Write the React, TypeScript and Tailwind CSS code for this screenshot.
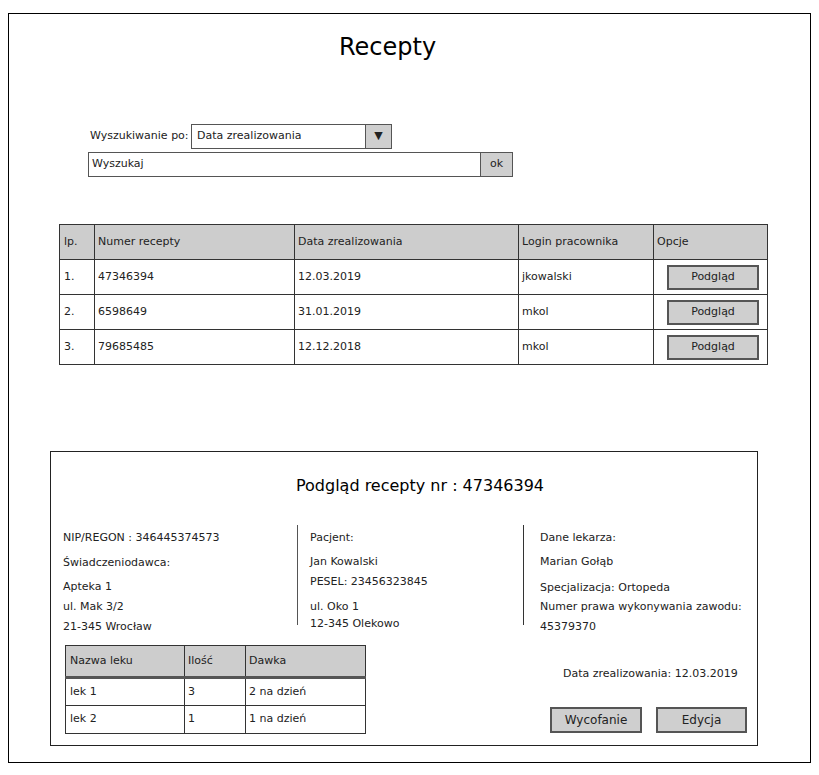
const font = "font-['DejaVu_Sans',sans-serif]"

const rows = [
  { lp: "1.", nr: "47346394", data: "12.03.2019", login: "jkowalski" },
  { lp: "2.", nr: "6598649", data: "31.01.2019", login: "mkol" },
  { lp: "3.", nr: "79685485", data: "12.12.2018", login: "mkol" },
]

const drugs = [
  { name: "lek 1", qty: "3", dose: "2 na dzień" },
  { name: "lek 2", qty: "1", dose: "1 na dzień" },
]

function GreyButton({ label, className = "" }: { label: string; className?: string }) {
  return (
    <div
      className={`flex items-center justify-center border-2 border-[#555] bg-[#cfcfcf] text-[#222] ${className}`}
    >
      {label}
    </div>
  )
}

export default function App() {
  return (
    <div className={`${font} h-[775px] w-[819px] bg-white pl-2 pt-[13px] text-[#222]`}>
      <div className="h-[750px] w-[803px] border border-black">
        {/* title */}
        <h1 className="pr-[44px] pt-[17px] text-center text-[24px] leading-[32px] text-black">Recepty</h1>

        {/* search */}
        <div className="ml-[79px] mt-[61px] text-[11px]">
          <div className="flex items-center">
            <span className="ml-[2px] w-[101px] whitespace-nowrap">Wyszukiwanie po:</span>
            <div className="flex h-[25px] w-[201px] border border-[#555]">
              <div className="flex flex-1 items-center pl-[5px]">Data zrealizowania</div>
              <div className="flex w-[26px] items-center justify-center border-l border-[#555] bg-[#cfcfcf] text-[11px]">
                ▼
              </div>
            </div>
          </div>
          <div className="mt-[3px] flex h-[25px]">
            <div className="flex w-[393px] items-center border border-[#555] pl-[3px]">Wyszukaj</div>
            <div className="flex w-[32px] items-center justify-center border border-l-0 border-[#555] bg-[#cfcfcf]">
              ok
            </div>
          </div>
        </div>

        {/* results table */}
        <table className="ml-[50px] mt-[47px] w-[709px] border-collapse text-[11px]">
          <thead>
            <tr className="h-[35px] bg-[#cdcdcd] text-left">
              <th className="w-[35px] border border-[#333] pl-[4px] font-normal">lp.</th>
              <th className="w-[200px] border border-[#333] pl-[3px] font-normal">Numer recepty</th>
              <th className="w-[224px] border border-[#333] pl-[3px] font-normal">Data zrealizowania</th>
              <th className="w-[135px] border border-[#333] pl-[3px] font-normal">Login pracownika</th>
              <th className="border border-[#333] pl-[3px] font-normal">Opcje</th>
            </tr>
          </thead>
          <tbody>
            {rows.map((r) => (
              <tr key={r.lp} className="h-[35px]">
                <td className="border border-[#333] pl-[4px]">{r.lp}</td>
                <td className="border border-[#333] pl-[3px]">{r.nr}</td>
                <td className="border border-[#333] pl-[3px]">{r.data}</td>
                <td className="border border-[#333] pl-[3px]">{r.login}</td>
                <td className="border border-[#333]">
                  <GreyButton label="Podgląd" className="ml-[13px] h-[25px] w-[92px]" />
                </td>
              </tr>
            ))}
          </tbody>
        </table>

        {/* preview panel */}
        <div className="ml-[41px] mt-[86px] h-[295px] w-[708px] border border-[#222]">
          <h2 className="pl-[32px] pt-[22px] text-center text-[16px] leading-[24px] text-black">
            Podgląd recepty nr : 47346394
          </h2>

          <div className="mt-[27px] flex text-[11px] leading-[16px]">
            <div className="w-[246px] pl-[12px]">
              <p className="mt-[5px]">NIP/REGON : 346445374573</p>
              <p className="mt-[9px]">Świadczeniodawca:</p>
              <p className="mt-[8px]">Apteka 1</p>
              <p className="mt-[4px]">ul. Mak 3/2</p>
              <p className="mt-[4px]">21-345 Wrocław</p>
            </div>
            <div className="h-[100px] w-[226px] border-l border-[#555] pl-[12px]">
              <p className="mt-[5px]">Pacjent:</p>
              <p className="mt-[8px]">Jan Kowalski</p>
              <p className="mt-[4px]">PESEL: 23456323845</p>
              <p className="mt-[9px]">ul. Oko 1</p>
              <p className="mt-[1px]">12-345 Olekowo</p>
            </div>
            <div className="h-[100px] border-l border-[#333] pl-[16px]">
              <p className="mt-[5px]">Dane lekarza:</p>
              <p className="mt-[8px]">Marian Gołąb</p>
              <p className="mt-[10px]">Specjalizacja: Ortopeda</p>
              <p className="mt-[3px]">Numer prawa wykonywania zawodu:</p>
              <p className="mt-[4px]">45379370</p>
            </div>
          </div>

          <div className="mt-[10px] flex">
            <table className="ml-[14px] w-[301px] border-collapse text-[11px]">
              <thead>
                <tr className="h-[32px] bg-[#cdcdcd] text-left">
                  <th className="w-[119px] border border-b-[3px] border-[#333] border-b-[#555] pl-[4px] font-normal">
                    Nazwa leku
                  </th>
                  <th className="w-[61px] border border-b-[3px] border-[#333] border-b-[#555] pl-[3px] font-normal">
                    Ilość
                  </th>
                  <th className="border border-b-[3px] border-[#333] border-b-[#555] pl-[3px] font-normal">Dawka</th>
                </tr>
              </thead>
              <tbody>
                {drugs.map((d) => (
                  <tr key={d.name} className="h-[28px]">
                    <td className="border border-[#333] pl-[4px]">{d.name}</td>
                    <td className="border border-[#333] pl-[3px]">{d.qty}</td>
                    <td className="border border-[#333] pl-[3px]">{d.dose}</td>
                  </tr>
                ))}
              </tbody>
            </table>

            <div className="ml-[184px] flex flex-col text-[11px]">
              <p className="ml-[13px] mt-[21px]">Data zrealizowania: 12.03.2019</p>
              <div className="mt-[24px] flex gap-[14px]">
                <GreyButton label="Wycofanie" className="h-[26px] w-[92px] text-[12px]" />
                <GreyButton label="Edycja" className="h-[26px] w-[91px] text-[12px]" />
              </div>
            </div>
          </div>
        </div>
      </div>
    </div>
  )
}
